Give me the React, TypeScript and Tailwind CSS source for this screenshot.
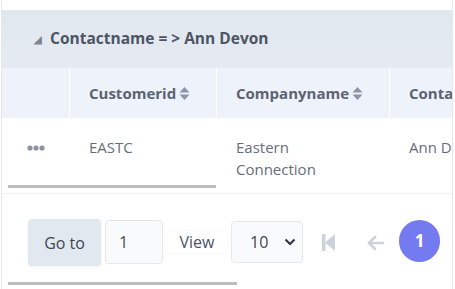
import React from 'react';

const font = { fontFamily: '"Open Sans", "Noto Sans", sans-serif' };

function SortIcon() {
  return (
    <svg width="11" height="15" viewBox="0 0 11 15" className="ml-[3px] inline-block">
      <path d="M5.5 1 L10.5 6.5 H0.5 Z" fill="#8b95a5" />
      <path d="M5.5 14 L10.5 8.5 H0.5 Z" fill="#8b95a5" />
    </svg>
  );
}

export default function App() {
  return (
    <div className="w-[455px] h-[289px] bg-white overflow-hidden" style={font}>
      <div className="ml-[1px] w-[452px] h-[289px] border-x border-[#e3e6ea] flex flex-col overflow-hidden">
        <div className="h-[10px]" />

        {/* grupo */}
        <div className="h-[58px] flex items-center pl-[32px] bg-gradient-to-b from-[#e1e7ef] to-[#e6ebf2] text-[#4b5563] text-[15.5px] font-bold">
          <span className="text-[10px] text-[#7c8591] mr-[8px] mt-[1px]">◢</span>
          Contactname = &gt; Ann Devon
        </div>

        {/* cabecera */}
        <div className="h-[50px] flex bg-[#eef2fa] text-[#5b6371] text-[15px] font-bold">
          <div className="w-[68px] shrink-0 border-r border-white" />
          <div className="w-[147px] shrink-0 border-r border-white flex items-center pl-[19px]">
            Customerid<SortIcon />
          </div>
          <div className="w-[173px] shrink-0 border-r border-white flex items-center pl-[19px]">
            Companyname<SortIcon />
          </div>
          <div className="w-[120px] shrink-0 flex items-center pl-[19px] whitespace-nowrap">Contactname</div>
        </div>

        {/* fila */}
        <div className="h-[76px] relative border-b border-[#eef0f3] text-[#666d79] text-[15px] leading-[22px]">
          <div className="flex pt-[18px]">
            <div className="w-[68px] shrink-0 pl-[25px] pt-[9px]">
              <svg width="18" height="6" viewBox="0 0 18 6">
                <circle cx="3" cy="3" r="2.6" fill="#8a93a3" />
                <circle cx="9" cy="3" r="2.6" fill="#8a93a3" />
                <circle cx="15" cy="3" r="2.6" fill="#8a93a3" />
              </svg>
            </div>
            <div className="w-[147px] shrink-0 pl-[19px]">EASTC</div>
            <div className="w-[173px] shrink-0 pl-[19px] pr-[40px]">Eastern Connection</div>
            <div className="w-[120px] shrink-0 pl-[19px] whitespace-nowrap">Ann Devon</div>
          </div>
          <div className="absolute left-[6px] top-[67px] w-[208px] h-[3px] bg-[#bdbdbd]" />
        </div>

        {/* paginacion */}
        <div className="relative flex-1 flex items-start pt-[25px] pl-[26px] text-[16px] text-[#3f4650]">
          <button className="w-[73px] h-[47px] rounded-[4px] bg-[#e2e8f0] shadow-[0_1px_3px_rgba(0,0,0,0.06)]">Go to</button>
          <div className="ml-[4px] mt-[1px] w-[58px] h-[44px] rounded-[4px] border border-[#e5e7eb] bg-[#f8fafc] flex items-center pl-[13px] text-[#475059]">1</div>
          <div className="ml-[4px] mt-[12px] w-[60px] h-[22px] rounded-[4px] bg-white shadow-[0_0_3px_rgba(0,0,0,0.06)] flex items-center justify-center text-[#4b5563]">View</div>
          <div className="ml-[4px] mt-[2px] w-[72px] h-[42px] rounded-[4px] border border-[#e5e7eb] bg-[#f8fafc] flex items-center pl-[18px] pr-[6px] justify-between text-[#3f4650]">
            10
            <svg width="12" height="8" viewBox="0 0 12 8">
              <path d="M1.5 1.5 L6 6 L10.5 1.5" stroke="#2d3440" strokeWidth="2" fill="none" />
            </svg>
          </div>
          <svg className="ml-[19px] mt-[15px]" width="13" height="17" viewBox="0 0 13 17">
            <rect x="0" y="0" width="3.5" height="17" fill="#ccd3dc" />
            <path d="M13 0 L3 8.5 L13 17 Z" fill="#ccd3dc" />
          </svg>
          <svg className="ml-[31px] mt-[16px]" width="18" height="16" viewBox="0 0 18 16">
            <path d="M17 8 H3 M9 2 L3 8 L9 14" stroke="#ccd3dc" strokeWidth="2.6" fill="none" strokeLinecap="round" strokeLinejoin="round" />
          </svg>
          <div className="ml-[15px] mt-[1px] w-[41px] h-[42px] rounded-full bg-[#747bf1] flex items-center justify-center text-white font-bold text-[17px]">1</div>
          <div className="absolute left-[6px] top-[88px] w-[229px] h-[3px] bg-[#bdbdbd]" />
        </div>
      </div>
    </div>
  );
}
